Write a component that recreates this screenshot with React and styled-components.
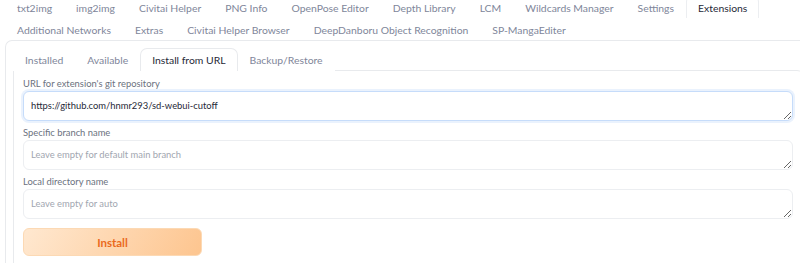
import React from 'react';
import styled, { createGlobalStyle } from 'styled-components';

const topTabs = [
  'txt2img', 'img2img', 'Civitai Helper', 'PNG Info', 'OpenPose Editor',
  'Depth Library', 'LCM', 'Wildcards Manager', 'Settings', 'Extensions',
  'Additional Networks', 'Extras', 'Civitai Helper Browser',
  'DeepDanboru Object Recognition', 'SP-MangaEditer',
];

const subTabs = ['Installed', 'Available', 'Install from URL', 'Backup/Restore'];

const fields = [
  { label: "URL for extension's git repository", value: 'https://github.com/hnmr293/sd-webui-cutoff', focused: true },
  { label: 'Specific branch name', placeholder: 'Leave empty for default main branch' },
  { label: 'Local directory name', placeholder: 'Leave empty for auto' },
];

const GlobalStyle = createGlobalStyle`
  html, body {
    margin: 0;
    background: #ffffff;
    overflow: hidden;
  }
  body {
    font-family: Lato, "Noto Sans", sans-serif;
    color: #1f2937;
  }
`;

const App = () => {
  return (
    <Page>
      <GlobalStyle />
      <TabNav>
        {topTabs.map((t) => (
          <TabButton key={t} $selected={t === 'Extensions'}>
            {t}
          </TabButton>
        ))}
      </TabNav>
      <OuterPanel>
        <SubNav>
          {subTabs.map((t) => (
            <SubTab key={t} $selected={t === 'Install from URL'}>
              {t}
            </SubTab>
          ))}
        </SubNav>
        <InnerPanel>
          {fields.map((f) => (
            <Field key={f.label}>
              <Label>{f.label}</Label>
              <TextBox
                rows={1}
                $focused={f.focused}
                defaultValue={f.value}
                placeholder={f.placeholder}
              />
            </Field>
          ))}
          <InstallButton>Install</InstallButton>
        </InnerPanel>
      </OuterPanel>
    </Page>
  );
};

export default App;

const Page = styled.div`
  width: 804px;
  padding-left: 5px;
  box-sizing: border-box;
`;

const TabNav = styled.div`
  display: flex;
  flex-wrap: wrap;
  margin-top: -4px;
`;

const TabButton = styled.div`
  height: 22px;
  line-height: 23px;
  padding: 0 11px;
  font-size: 10.4px;
  white-space: nowrap;
  box-sizing: border-box;
  color: ${(p) => (p.$selected ? '#1f2937' : '#80869a')};
  background: ${(p) => (p.$selected ? '#ffffff' : 'transparent')};
  border: 1px solid ${(p) => (p.$selected ? '#eceef1' : 'transparent')};
  border-bottom: none;
  border-radius: 6px 6px 0 0;
`;

const OuterPanel = styled.div`
  border: 1px solid #e8eaed;
  border-right: none;
  border-radius: 7px 0 0 0;
  padding: 7px 0 0 7px;
  height: 240px;
`;

const SubNav = styled.div`
  display: flex;
`;

const SubTab = styled.div`
  height: 22px;
  line-height: 22px;
  padding: 0 11px;
  font-size: 10.4px;
  white-space: nowrap;
  color: ${(p) => (p.$selected ? '#1f2937' : '#80869a')};
  background: #ffffff;
  border: 1px solid ${(p) => (p.$selected ? '#e8eaed' : 'transparent')};
  border-bottom: none;
  border-radius: 7px 7px 0 0;
  margin-bottom: -1px;
  position: relative;
  z-index: 1;
`;

const InnerPanel = styled.div`
  border: 1px solid #e8eaed;
  border-radius: 0 7px 0 0;
  padding: 5px 10px 0 9px;
  display: flex;
  flex-direction: column;
  gap: 4px;
  height: 200px;
`;

const Field = styled.div`
  display: flex;
  flex-direction: column;
`;

const Label = styled.div`
  font-size: 9.4px;
  line-height: 15px;
  color: #6b7280;
`;

const TextBox = styled.textarea`
  display: block;
  width: 100%;
  height: 30px;
  box-sizing: border-box;
  padding: 7px 7px;
  font-family: Lato, "Noto Sans", sans-serif;
  font-size: 9.4px;
  line-height: 14px;
  color: #1f2937;
  background: #ffffff;
  border: 1px solid ${(p) => (p.$focused ? '#c6dcfa' : '#eceef1')};
  border-radius: 6px;
  box-shadow: ${(p) => (p.$focused ? '0 0 0 2px #eaf2fd' : 'none')};
  outline: none;
  resize: vertical;
  &::placeholder {
    color: #a1a6b0;
  }
`;

const InstallButton = styled.button`
  width: 179px;
  height: 28px;
  margin-top: 5px;
  border: 1px solid #fcd9b4;
  border-radius: 6px;
  background: linear-gradient(120deg, #ffe8d0 0%, #fdc58f 100%);
  color: #ea6a1c;
  font-family: Lato, "Noto Sans", sans-serif;
  font-size: 11.5px;
  font-weight: 700;
  cursor: pointer;
`;
